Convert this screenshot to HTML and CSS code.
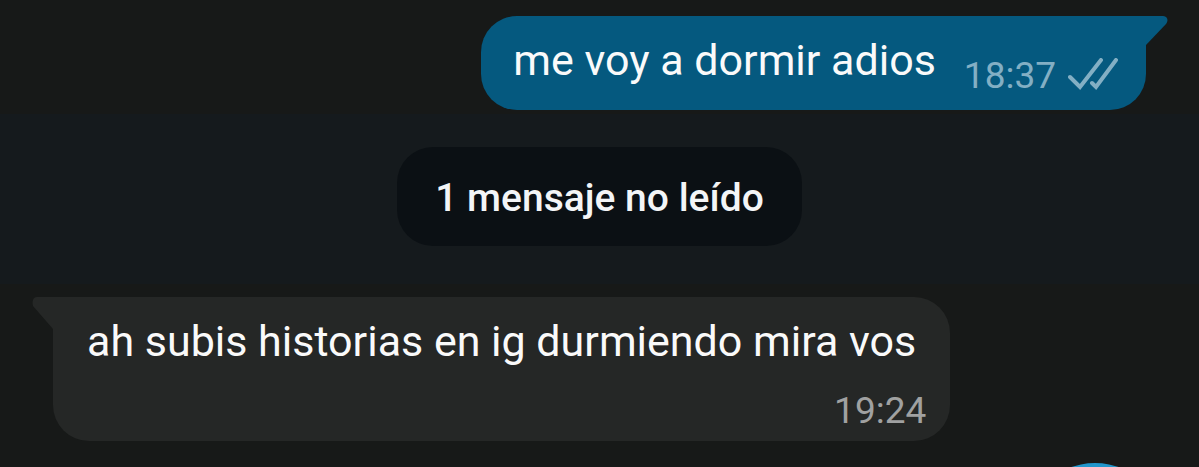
FILE: index.html
```
<!DOCTYPE html>
<html lang="es">
<head>
    <meta charset="UTF-8">
    <meta name="viewport" content="width=device-width, initial-scale=1.0">
    <title>Chat</title>
    <link rel="stylesheet" href="styles.css">
</head>
<body>

    <main class="chat">
        <div class="row row-out">
            <div class="bubble bubble-out">
                <svg class="tail tail-out" viewBox="0 0 24 32" aria-hidden="true">
                    <path d="M0 0H18C22 0 24 4 21 8L1 29L0 30Z"/>
                </svg>
                <p class="text">me voy a dormir adios</p>
                <div class="meta">
                    <time>18:37</time>
                    <svg class="ticks" viewBox="0 0 50 36" role="img" aria-label="Entregado">
                        <path d="M2 19L12 29L33 2M24 25L28 29L48 2"/>
                    </svg>
                </div>
            </div>
        </div>

        <div class="unread">
            <span class="pill">1 mensaje no leído</span>
        </div>

        <div class="row">
            <div class="bubble bubble-in">
                <svg class="tail tail-in" viewBox="0 0 24 36" aria-hidden="true">
                    <path d="M24 0H6C2 0 1 4 2 9L22 32V36H24Z"/>
                </svg>
                <p class="text">ah subis historias en ig durmiendo mira vos</p>
                <div class="meta">
                    <time>19:24</time>
                </div>
            </div>
        </div>

        <button class="fab" aria-label="Enviar"></button>
    </main>

</body>
</html>
```
FILE: styles.css
```
* {
    box-sizing: border-box;
}
body {
    margin: 0;
    background-color: #171918;
    color: #fafafa;
    font-family: Roboto, "Liberation Sans", sans-serif;
}
.chat {
    position: relative;
    height: 100vh;
    overflow: hidden;
}
.row {
    display: flex;
    padding: 13px 53px;
}
.row-out {
    justify-content: flex-end;
    padding: 16px 53px 4px;
}
.bubble {
    position: relative;
    padding: 16px 32px;
    border-radius: 36px;
}
.bubble-out {
    display: flex;
    gap: 28px;
    padding-right: 28px;
    padding-bottom: 12px;
    background-color: #05597f;
    border-top-right-radius: 0;
}
.bubble-in {
    padding: 16px 34px 8px;
    background-color: #252726;
    border-top-left-radius: 0;
}
.text {
    margin: 0;
    font-size: 43px;
    line-height: 56px;
}
.meta {
    display: flex;
    align-items: center;
    gap: 12px;
    color: #83afc4;
    font-size: 37px;
    line-height: 44px;
}
.bubble-out .meta {
    padding-top: 22px;
}
.bubble-in .meta {
    justify-content: flex-end;
    margin-right: -10px;
    padding-top: 20px;
    color: #a0a1a1;
}
.ticks {
    width: 50px;
    height: 36px;
    fill: none;
    stroke: currentColor;
    stroke-width: 4;
    stroke-linecap: round;
}
/* corner that sticks out at the top of each bubble */
.tail {
    position: absolute;
    top: 0;
    width: 24px;
}
.tail-out {
    left: 100%;
    margin-left: -1px;
    height: 32px;
    fill: #05597f;
}
.tail-in {
    right: 100%;
    margin-right: -2px;
    height: 36px;
    fill: #252726;
}
.unread {
    display: flex;
    justify-content: center;
    padding: 33px 0 38px;
    background-color: #151a1d;
}
.pill {
    padding: 26px 38px 22px;
    border-radius: 36px;
    background-color: #0b1014;
    color: #f3f5f7;
    font-size: 39px;
    font-weight: 500;
    line-height: 51px;
}
.fab {
    position: absolute;
    right: 32px;
    bottom: -140px;
    width: 144px;
    height: 144px;
    border: none;
    border-radius: 50%;
    background-color: #2196cb;
    cursor: pointer;
}
```
